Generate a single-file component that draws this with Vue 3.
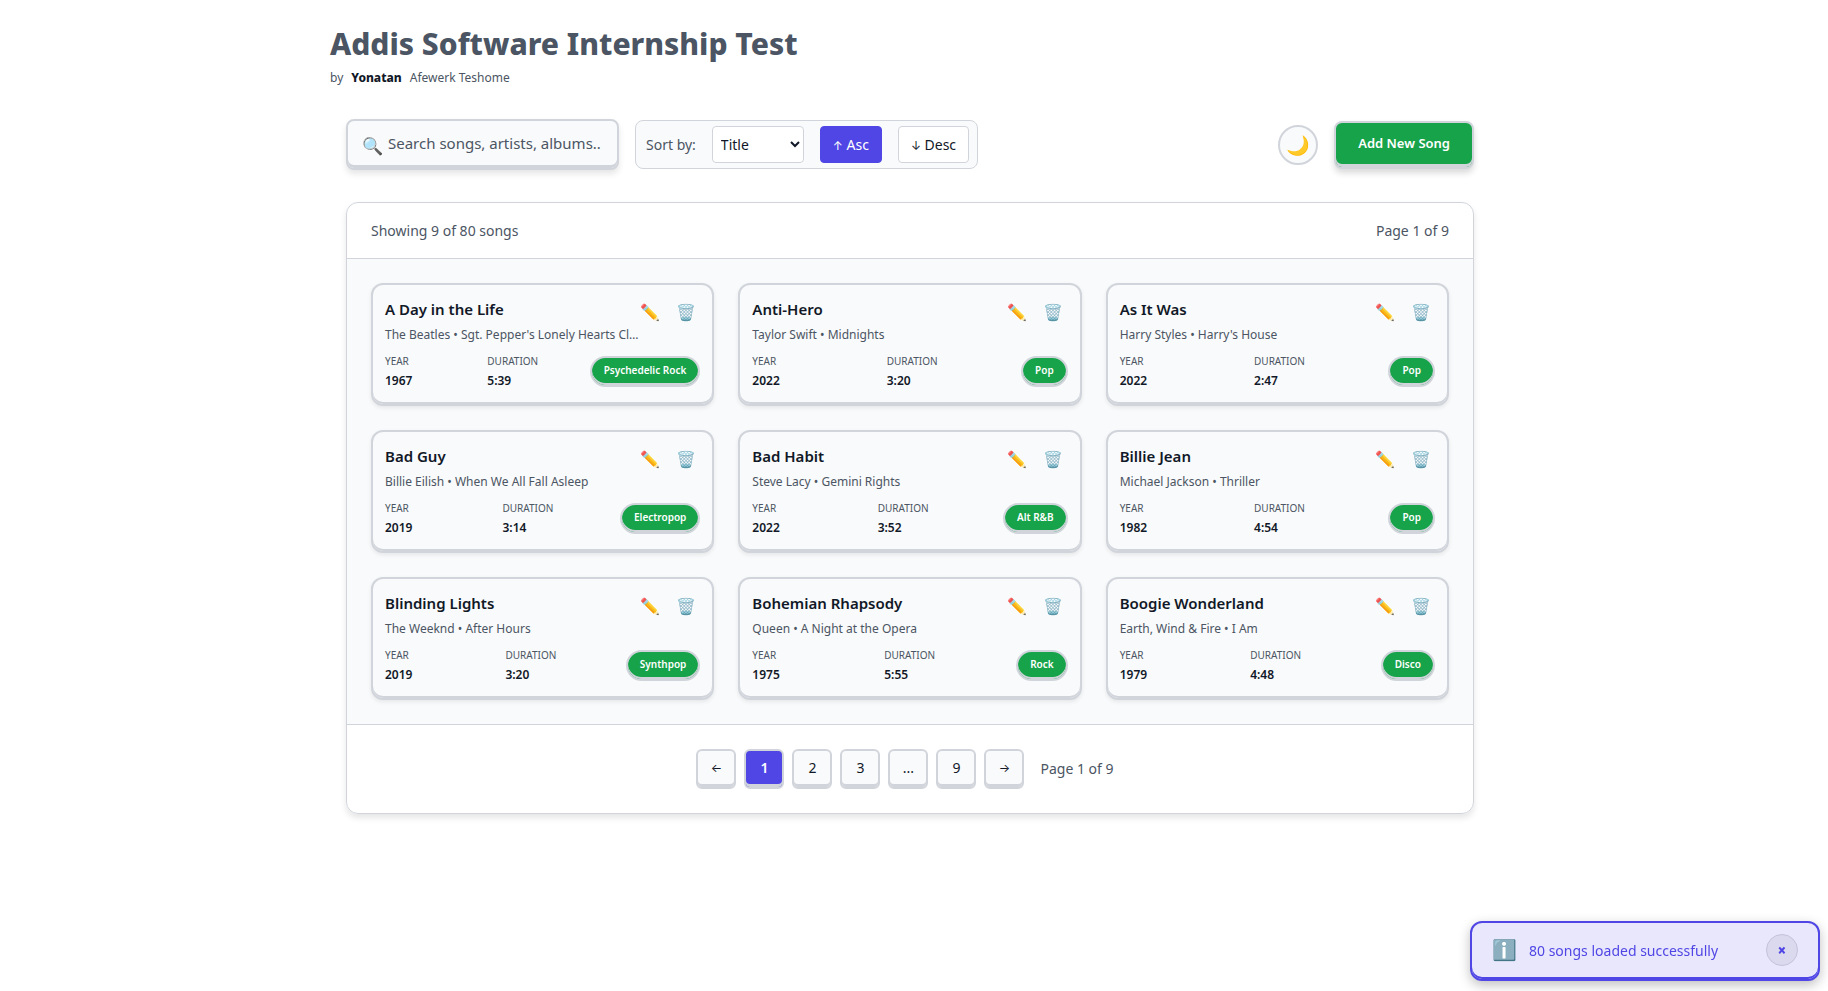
<script setup>
import { ref } from 'vue'

const sortKey = ref('Title')
const songs = [
  { title: 'A Day in the Life', by: "The Beatles • Sgt. Pepper's Lonely Hearts Cl…", year: 1967, duration: '5:39', genre: 'Psychedelic Rock' },
  { title: 'Anti-Hero', by: 'Taylor Swift • Midnights', year: 2022, duration: '3:20', genre: 'Pop' },
  { title: 'As It Was', by: "Harry Styles • Harry's House", year: 2022, duration: '2:47', genre: 'Pop' },
  { title: 'Bad Guy', by: 'Billie Eilish • When We All Fall Asleep', year: 2019, duration: '3:14', genre: 'Electropop' },
  { title: 'Bad Habit', by: 'Steve Lacy • Gemini Rights', year: 2022, duration: '3:52', genre: 'Alt R&B' },
  { title: 'Billie Jean', by: 'Michael Jackson • Thriller', year: 1982, duration: '4:54', genre: 'Pop' },
  { title: 'Blinding Lights', by: 'The Weeknd • After Hours', year: 2019, duration: '3:20', genre: 'Synthpop' },
  { title: 'Bohemian Rhapsody', by: 'Queen • A Night at the Opera', year: 1975, duration: '5:55', genre: 'Rock' },
  { title: 'Boogie Wonderland', by: 'Earth, Wind & Fire • I Am', year: 1979, duration: '4:48', genre: 'Disco' },
]
const pages = ['←', '1', '2', '3', '...', '9', '→']
const isArrow = (p) => p === '←' || p === '→'
</script>

<template>
  <div class="page">
    <header>
      <h1>Addis Software Internship Test</h1>
      <p class="byline"><span>by</span><strong>Yonatan</strong><span>Afewerk Teshome</span></p>
    </header>

    <div class="toolbar">
      <label class="search">
        <span class="search-icon" aria-hidden="true">🔍</span>
        <input type="text" placeholder="Search songs, artists, albums.." aria-label="Search songs" />
      </label>
      <div class="sort">
        <label for="sort">Sort by:</label>
        <select id="sort" v-model="sortKey">
          <option>Title</option>
          <option>Artist</option>
          <option>Album</option>
          <option>Year</option>
          <option>Duration</option>
        </select>
        <button class="dir active"><span class="arrow">↑</span> Asc</button>
        <button class="dir"><span class="arrow">↓</span> Desc</button>
      </div>
      <div class="actions">
        <button class="theme" aria-label="Toggle theme">🌙</button>
        <button class="add">Add New Song</button>
      </div>
    </div>

    <main class="panel">
      <div class="panel-head"><span>Showing 9 of 80 songs</span><span>Page 1 of 9</span></div>
      <div class="grid">
        <article v-for="s in songs" :key="s.title" class="card">
          <div class="card-top">
            <div class="names">
              <h2>{{ s.title }}</h2>
              <p>{{ s.by }}</p>
            </div>
            <div class="card-actions">
              <button :aria-label="'Edit ' + s.title">✏️</button>
              <button :aria-label="'Delete ' + s.title">🗑️</button>
            </div>
          </div>
          <div class="stats">
            <div class="stat"><span class="key">YEAR</span><span class="val">{{ s.year }}</span></div>
            <div class="stat"><span class="key">DURATION</span><span class="val">{{ s.duration }}</span></div>
            <span class="genre">{{ s.genre }}</span>
          </div>
        </article>
      </div>
      <nav class="pager" aria-label="Pages">
        <button v-for="p in pages" :key="p" :class="{ current: p === '1', arrow: isArrow(p) }">{{ p }}</button>
        <span class="pager-info">Page 1 of 9</span>
      </nav>
    </main>

    <div class="toast" role="status">
      <span class="toast-icon" aria-hidden="true">ℹ️</span>
      <span class="toast-text">80 songs loaded successfully</span>
      <button aria-label="Dismiss">×</button>
    </div>
  </div>
</template>

<style>
body { background: #fff; }
</style>

<style scoped>
* { box-sizing: border-box; }
.page {
  max-width: 1208px;
  margin: 0 auto;
  padding: 20px 28px 20px 20px;
  font-family: "Noto Sans", "Noto Color Emoji", sans-serif;
  font-size: 14px;
  color: #111827;
}
h1, h2, p { margin: 0; }
button, input, select { font: inherit; color: inherit; margin: 0; }
button { cursor: pointer; padding: 0; }
h1 { font-size: 30px; line-height: 48px; font-weight: 800; color: #4b5563; }
.byline { display: flex; gap: 8px; font-size: 12px; line-height: 20px; color: #4b5563; }
.byline strong { color: #111827; font-weight: 800; }

.toolbar { display: flex; align-items: center; gap: 16px; margin: 31px 16px 32px; }
.search {
  display: flex; align-items: center; width: 273px; height: 51px; padding: 0 14px 4px;
  border: 2px solid #d1d5db; border-radius: 8px; background: #f9fafb;
  box-shadow: inset 0 -3px 0 #d1d5db, 0 4px 6px rgba(0, 0, 0, 0.1);
}
.search-icon { font-size: 17px; line-height: 20px; width: 26px; flex: none; padding-top: 6px; }
.search input { flex: 1; min-width: 0; padding: 0; border: 0; outline: 0; background: transparent; font-size: 15px; }
.search input::placeholder { color: #4b5563; opacity: 1; }
.sort {
  display: flex; align-items: center; gap: 16px; height: 49px; padding: 0 8px 0 10px;
  border: 1px solid #d1d5db; border-radius: 8px; background: #f9fafb;
}
.sort label { color: #4b5563; }
.sort select { width: 92px; height: 37px; padding: 0 4px; border: 1px solid #d1d5db; border-radius: 4px; background: #fff; }
.dir { height: 37px; padding: 0 12px; border: 1px solid #d1d5db; border-radius: 4px; background: #fff; }
.dir.active { background: #4f46e5; border-color: #4f46e5; color: #fff; }
.arrow { font-family: Inter, sans-serif; font-size: 12px; }
.actions { display: flex; align-items: center; gap: 16px; margin-left: auto; }
.theme { width: 40px; height: 40px; border: 2px solid #d1d5db; border-radius: 50%; background: #f9fafb; font-size: 19px; line-height: 24px; }
.add {
  height: 48px; padding: 0 22px 3px; border: 2px solid #d1d5db; border-radius: 8px;
  background: #16a34a; color: #fff; font-size: 13px; font-weight: 600;
  box-shadow: inset 0 -3px 0 #d1d5db, 0 4px 6px rgba(0, 0, 0, 0.15);
}

.panel { margin: 0 16px; border: 1px solid #d1d5db; border-radius: 12px; overflow: hidden; box-shadow: 0 4px 6px rgba(0, 0, 0, 0.1); }
.panel-head { display: flex; justify-content: space-between; align-items: center; height: 56px; padding: 0 24px; border-bottom: 1px solid #d1d5db; color: #4b5563; }
.grid { display: grid; grid-template-columns: repeat(3, minmax(0, 1fr)); gap: 24px; padding: 24px; background: #f9fafb; }
.card {
  height: 123px; padding: 12px; border: 2px solid #d1d5db; border-radius: 12px; background: #f9fafb;
  box-shadow: inset 0 -2px 0 #d1d5db, 0 2px 4px rgba(0, 0, 0, 0.08);
}
.card-top { display: flex; justify-content: space-between; height: 51px; }
.names { flex: 1; min-width: 0; }
h2 { font-size: 15px; line-height: 24px; font-weight: 600; }
.names p { font-size: 12px; line-height: 28px; color: #4b5563; white-space: nowrap; }
.card-actions { display: flex; gap: 8px; flex: none; }
.card-actions button { width: 28px; height: 30px; border: 0; background: none; font-size: 16px; line-height: 24px; }
.stats { display: flex; align-items: center; margin-top: 4px; }
.stat { flex: 1; display: flex; flex-direction: column; }
.key { font-size: 10px; line-height: 18px; color: #4b5563; }
.val { font-size: 12px; line-height: 21px; font-weight: 600; }
.genre {
  height: 31px; padding: 0 12px; border: 2px solid #d1d5db; border-radius: 16px; background: #16a34a;
  color: #fff; font-size: 10px; line-height: 25px; font-weight: 600; box-shadow: inset 0 -2px 0 #d1d5db;
}

.pager { display: flex; justify-content: center; align-items: center; gap: 8px; padding: 24px; border-top: 1px solid #d1d5db; }
.pager button {
  width: 40px; height: 40px; padding-bottom: 4px; border: 2px solid #d1d5db; border-radius: 6px;
  background: #f9fafb; box-shadow: inset 0 -3px 0 #d1d5db;
}
.pager button.current { background: #4f46e5; color: #fff; font-weight: 600; }
.pager-info { margin: 0 10px 0 8px; padding-bottom: 2px; color: #4b5563; }

.toast {
  position: fixed; right: 8px; bottom: 10px; display: flex; align-items: center; width: 350px; height: 60px;
  padding: 0 20px 2px; border: 2px solid #4f46e5; border-radius: 12px; background: #e9e7fc; color: #4f46e5;
  box-shadow: inset 0 -2px 0 #4f46e5, 0 4px 12px rgba(0, 0, 0, 0.25);
}
.toast-icon { font-size: 20px; width: 37px; line-height: 24px; }
.toast-text { flex: 1; }
.toast button { width: 32px; height: 32px; border: 1px solid #c5c2dc; border-radius: 50%; background: #dbd9ed; font-size: 15px; line-height: 20px; font-weight: 900; }
</style>
